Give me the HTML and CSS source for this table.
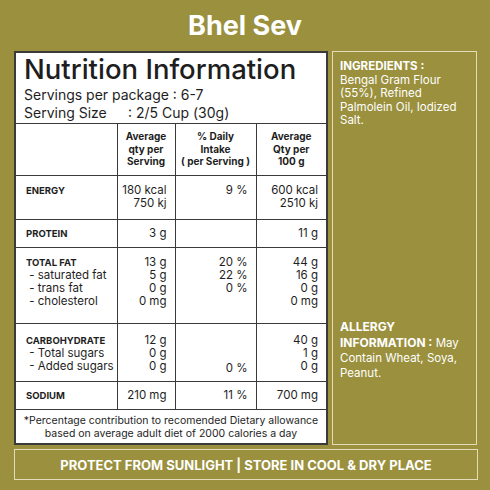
FILE: index.html
```html
<!DOCTYPE html>
<html lang="en">
<head>
    <meta charset="UTF-8">
    <meta name="viewport" content="width=device-width, initial-scale=1.0">
    <title>Bhel Sev</title>
    <link rel="stylesheet" href="styles.css">
</head>
<body>
    <h1 class="title">Bhel Sev</h1>

    <div class="main">
        <div class="panel">
            <div class="panel-head">
                <h2>Nutrition Information</h2>
                <p>Servings per package : 6-7</p>
                <p><span class="size-label">Serving Size</span>: 2/5 Cup (30g)</p>
            </div>
            <table>
                <colgroup>
                    <col class="c1"><col class="c2"><col class="c3"><col class="c4">
                </colgroup>
                <thead>
                    <tr class="r-head">
                        <th></th>
                        <th>Average<br>qty per<br>Serving</th>
                        <th>% Daily<br>Intake<br>( per Serving )</th>
                        <th>Average<br>Qty per<br>100 g</th>
                    </tr>
                </thead>
                <tbody>
                    <tr class="r-energy">
                        <td class="name"><b>ENERGY</b></td>
                        <td>180 kcal<br>750 kj</td>
                        <td>9 %</td>
                        <td>600 kcal<br>2510 kj</td>
                    </tr>
                    <tr class="r-short">
                        <td class="name"><b>PROTEIN</b></td>
                        <td>3 g</td>
                        <td></td>
                        <td>11 g</td>
                    </tr>
                    <tr class="r-fat">
                        <td class="name"><b>TOTAL FAT</b><br>&nbsp;- saturated fat<br>&nbsp;- trans fat<br>&nbsp;- cholesterol</td>
                        <td>13 g<br>5 g<br>0 g<br>0 mg</td>
                        <td>20 %<br>22 %<br>0 %</td>
                        <td>44 g<br>16 g<br>0 g<br>0 mg</td>
                    </tr>
                    <tr class="r-carb">
                        <td class="name"><b>CARBOHYDRATE</b><br>&nbsp;- Total sugars<br>&nbsp;- Added sugars</td>
                        <td>12 g<br>0 g<br>0 g</td>
                        <td class="low">0 %</td>
                        <td>40 g<br>1 g<br>0 g</td>
                    </tr>
                    <tr class="r-short">
                        <td class="name"><b>SODIUM</b></td>
                        <td>210 mg</td>
                        <td>11 %</td>
                        <td>700 mg</td>
                    </tr>
                </tbody>
            </table>
            <p class="note">*Percentage contribution to recomended Dietary allowance<br>based on average adult diet of 2000 calories a day</p>
        </div>

        <div class="side">
            <p class="ingredients"><b>INGREDIENTS :</b><br>Bengal Gram Flour (55%), Refined Palmolein Oil, Iodized Salt.</p>
            <p class="allergy"><b>ALLERGY<br>INFORMATION :</b> May<br>Contain Wheat, Soya,<br>Peanut.</p>
        </div>
    </div>

    <div class="storage">PROTECT FROM SUNLIGHT | STORE IN COOL &amp; DRY PLACE</div>
</body>
</html>
```

FILE: styles.css
```css
body {
    margin: 0;
    width: 490px;
    height: 490px;
    background: #9a903d;
    font-family: Inter, "Open Sans", sans-serif;
    color: #1e1e1e;
}
.title {
    margin: 0;
    height: 51px;
    line-height: 51px;
    text-align: center;
    font-size: 27px;
    font-weight: 700;
    color: #ffffff;
}
.main {
    display: flex;
    gap: 4px;
    padding: 0 12px 0 14px;
    height: 394px;
}
.panel {
    width: 314px;
    box-sizing: border-box;
    background: #ffffff;
    border: 2px solid #3a3a3a;
    display: flex;
    flex-direction: column;
}
.panel-head {
    height: 70px;
    box-sizing: border-box;
    padding: 0 8px;
}
.panel-head h2 {
    margin: 0;
    font-size: 27.5px;
    font-weight: 500;
    line-height: 33px;
}
.panel-head p {
    margin: 0;
    font-size: 14px;
    line-height: 18px;
}
.size-label {
    display: inline-block;
    width: 104px;
}
table {
    width: 100%;
    border-collapse: collapse;
    table-layout: fixed;
    font-size: 11.5px;
}
.c1 { width: 101px; }
.c2 { width: 58px; }
.c3 { width: 81px; }
.c4 { width: 70px; }
th, td {
    border: 1px solid #3a3a3a;
    line-height: 13px;
    vertical-align: top;
    text-align: right;
    padding: 8px 8px 0 4px;
}
th:first-child, td:first-child {
    border-left: none;
}
th:last-child, td:last-child {
    border-right: none;
}
th {
    font-size: 10px;
    font-weight: 700;
    text-align: center;
    line-height: 12.5px;
    padding: 6px 2px 0;
}
td.name {
    text-align: left;
    padding: 8px 0 0 10px;
}
td.name b {
    font-size: 9.5px;
}
.r-head { height: 52px; }
.r-energy { height: 44px; }
.r-short { height: 28px; }
.r-fat { height: 76px; }
.r-carb { height: 58px; }
.r-short td {
    vertical-align: middle;
    padding-top: 0;
}
.r-carb td {
    padding-top: 10px;
}
.r-carb td.low {
    vertical-align: bottom;
    padding-bottom: 6px;
}
.note {
    margin: 0;
    flex: 1;
    display: flex;
    align-items: center;
    justify-content: center;
    text-align: center;
    font-size: 10.5px;
    line-height: 13px;
}
.side {
    width: 145px;
    box-sizing: border-box;
    border: 1.5px solid #e2dcb8;
    padding: 8px 7px;
    color: #ffffff;
    font-size: 11.5px;
    line-height: 13.5px;
}
.side p {
    margin: 0;
}
.allergy {
    margin-top: 191px !important;
    line-height: 15px;
}
.allergy b {
    font-size: 12px;
}
.storage {
    margin: 4px 12px 0 14px;
    height: 31px;
    box-sizing: border-box;
    border: 1.5px solid #e2dcb8;
    color: #ffffff;
    font-weight: 700;
    font-size: 13px;
    display: flex;
    align-items: center;
    justify-content: center;
}
```
